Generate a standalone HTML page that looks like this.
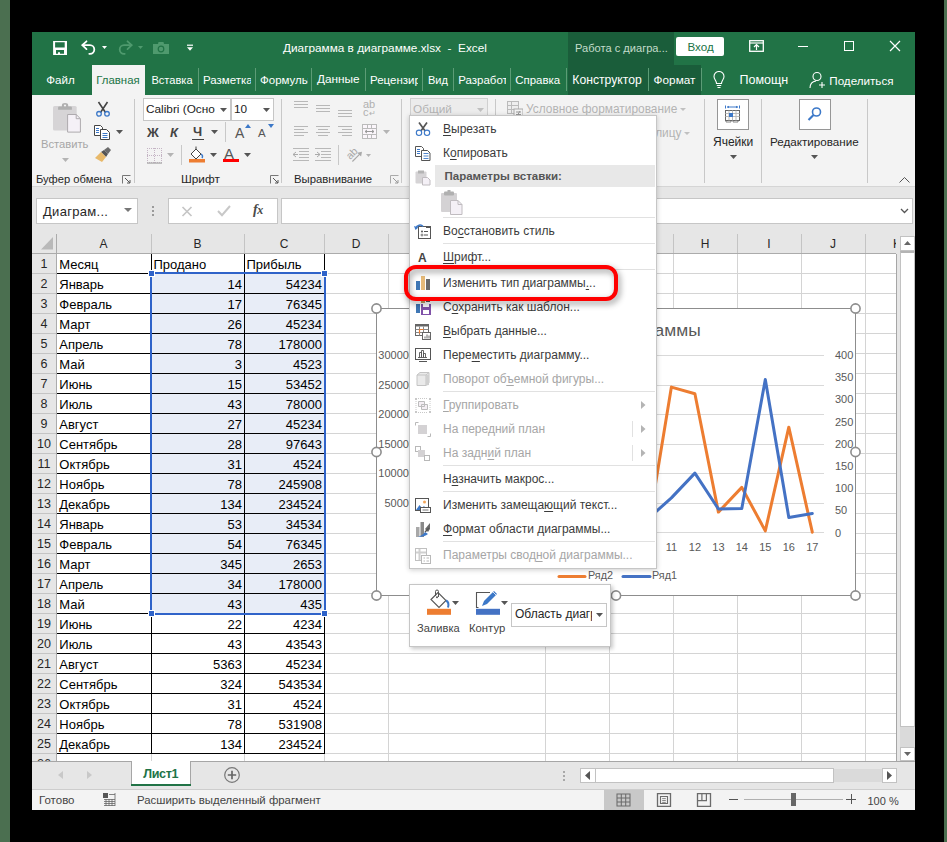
<!DOCTYPE html>
<html><head><meta charset="utf-8">
<style>
*{box-sizing:border-box;margin:0;padding:0}
html,body{width:947px;height:842px;overflow:hidden;background:#000;font-family:"Liberation Sans",sans-serif}
.a{position:absolute}
.t{position:absolute;white-space:nowrap;line-height:1}
#win{position:absolute;left:32px;top:32px;width:883px;height:777px;background:#e6e6e6;overflow:hidden}
</style></head><body>
<div class="a" style="left:0;top:0;width:10px;height:842px;background:#4b6f50"></div>
<div class="a" style="left:944px;top:0;width:3px;height:842px;background:#4b6f50"></div>
<div class="a" style="left:32px;top:32px;width:883px;height:778px;background:#e6e6e6"></div>
<div class="a" style="left:32px;top:32px;width:883px;height:63px;background:#217346"></div>
<div class="a" style="left:568px;top:32px;width:106px;height:33px;background:#1a5d3a"></div>
<div class="a" style="left:568px;top:65px;width:133px;height:30px;background:#1a5d3a"></div>
<div class="a" style="left:92px;top:65px;width:53px;height:30px;background:#f3f3f3"></div>
<!-- TITLEBAR CONTENT -->
<svg class="a" style="left:52px;top:40px" width="16" height="16" viewBox="0 0 16 16"><path fill="#fff" fill-rule="evenodd" d="M1.1 1H15V15H1.1zM3.1 2.2V7.6H12.7V2.2zM4 10.1V13.8H6V12.3H8V13.8H12V10.1z"/></svg>
<svg class="a" style="left:81px;top:40px" width="16" height="15" viewBox="0 0 16 15"><path d="M1.5 5.2h7.5a4.3 4.3 0 0 1 0 8.6H8.3" fill="none" stroke="#fff" stroke-width="1.8" stroke-linecap="round"/><path d="M5.5 1.3L1.3 5.2l4.2 3.9" fill="none" stroke="#fff" stroke-width="1.8" stroke-linecap="round" stroke-linejoin="round"/></svg>
<svg class="a" style="left:102px;top:46px" width="5" height="3" viewBox="0 0 5 3"><path d="M0 0h5L2.5 3z" fill="#fff"/></svg>
<svg class="a" style="left:117px;top:40px" width="16" height="15" viewBox="0 0 16 15"><path d="M14.5 5.2H7a4.3 4.3 0 0 0 0 8.6h0.7" fill="none" stroke="#4f9a6e" stroke-width="1.8" stroke-linecap="round"/><path d="M10.5 1.3l4.2 3.9-4.2 3.9" fill="none" stroke="#4f9a6e" stroke-width="1.8" stroke-linecap="round" stroke-linejoin="round"/></svg>
<svg class="a" style="left:138px;top:46px" width="5" height="3" viewBox="0 0 5 3"><path d="M0 0h5L2.5 3z" fill="#4f9a6e"/></svg>
<svg class="a" style="left:153px;top:42px" width="16" height="12" viewBox="0 0 16 12"><path d="M0 2h5l0.5-2h5l0.5 2h5v10H0z" fill="#4f9a6e"/><circle cx="8" cy="7" r="2.8" fill="none" stroke="#217346" stroke-width="1.2"/><rect x="6.8" y="5.8" width="2.4" height="2.4" fill="#4f9a6e"/></svg>
<svg class="a" style="left:187px;top:44px" width="6" height="7" viewBox="0 0 6 7"><rect x="0" y="0.6" width="6" height="1.2" fill="#fff"/><path d="M0 3.2h6L3 6.8z" fill="#fff"/></svg>
<div class="t" style="left:283px;top:42.5px;font-size:11.8px;color:#fff">Диаграмма в диаграмме.xlsx&nbsp; -&nbsp; Excel</div>
<div class="t" style="left:575px;top:43px;font-size:11.1px;color:#c4dccb">Работа с диагра...</div>
<div class="a" style="left:676px;top:37px;width:48px;height:19px;background:#fff;border-radius:2px"></div>
<div class="t" style="left:687.5px;top:41px;font-size:11.6px;color:#217346">Вход</div>
<svg class="a" style="left:749px;top:40px" width="15" height="12" viewBox="0 0 15 12"><rect x="0.7" y="0.7" width="13.6" height="10.6" fill="none" stroke="#fff" stroke-width="1.3"/><path d="M1 3h13" stroke="#fff" stroke-width="1.2"/><path d="M7.5 10V5M5 7l2.5-2.5L10 7" fill="none" stroke="#fff" stroke-width="1.2"/></svg>
<div class="a" style="left:798px;top:46px;width:10px;height:1px;background:#fff"></div>
<div class="a" style="left:844px;top:41px;width:10px;height:10px;border:1px solid #fff"></div>
<svg class="a" style="left:889px;top:40px" width="12" height="12" viewBox="0 0 12 12"><path d="M1 1l10 10M11 1L1 11" stroke="#fff" stroke-width="1.2"/></svg>
<!-- TABS -->
<div class="t" style="left:46.3px;top:74.6px;font-size:11.59px;color:#fff">Файл</div>
<div class="t" style="left:96.3px;top:74.8px;font-size:11.40px;color:#217346">Главная</div>
<div class="t" style="left:151.4px;top:75.0px;font-size:11.09px;color:#fff">Вставка</div>
<div class="a" style="left:198px;top:68px;width:1px;height:23px;background:#5c9c76"></div>
<div class="a" style="left:203px;top:65px;width:48px;height:30px;overflow:hidden"><div class="t" style="left:0;top:9.7px;font-size:11.50px;color:#fff">Разметка страницы</div></div>
<div class="a" style="left:255px;top:68px;width:1px;height:23px;background:#5c9c76"></div>
<div class="a" style="left:260px;top:65px;width:48px;height:30px;overflow:hidden"><div class="t" style="left:0;top:9.7px;font-size:11.50px;color:#fff">Формулы</div></div>
<div class="a" style="left:311px;top:68px;width:1px;height:23px;background:#5c9c76"></div>
<div class="t" style="left:317px;top:74.4px;font-size:11.81px;color:#fff">Данные</div>
<div class="a" style="left:365px;top:68px;width:1px;height:23px;background:#5c9c76"></div>
<div class="a" style="left:370px;top:65px;width:48px;height:30px;overflow:hidden"><div class="t" style="left:0;top:9.7px;font-size:11.50px;color:#fff">Рецензирование</div></div>
<div class="a" style="left:422px;top:68px;width:1px;height:23px;background:#5c9c76"></div>
<div class="t" style="left:428px;top:75.0px;font-size:11.06px;color:#fff">Вид</div>
<div class="a" style="left:453px;top:68px;width:1px;height:23px;background:#5c9c76"></div>
<div class="a" style="left:458.2px;top:65px;width:48px;height:30px;overflow:hidden"><div class="t" style="left:0;top:9.7px;font-size:11.50px;color:#fff">Разработчик</div></div>
<div class="a" style="left:510px;top:68px;width:1px;height:23px;background:#5c9c76"></div>
<div class="t" style="left:515.3px;top:74.7px;font-size:11.44px;color:#fff">Справка</div>
<div class="a" style="left:566px;top:68px;width:1px;height:23px;background:#5c9c76"></div>
<div class="t" style="left:572.3px;top:74.1px;font-size:12.19px;color:#fff">Конструктор</div>
<div class="a" style="left:648px;top:68px;width:1px;height:23px;background:#5c9c76"></div>
<div class="t" style="left:653.6px;top:74.4px;font-size:11.77px;color:#fff">Формат</div>
<div class="a" style="left:701px;top:68px;width:1px;height:23px;background:#5c9c76"></div>
<div class="t" style="left:739.5px;top:73.8px;font-size:12.51px;color:#fff">Помощн</div>
<div class="t" style="left:829.3px;top:74.5px;font-size:11.64px;color:#fff">Поделиться</div>
<svg class="a" style="left:713px;top:71px" width="12" height="18" viewBox="0 0 12 18"><path d="M3.5 12.5C3.5 9.5 1 8.5 1 5.5a5 5 0 0 1 10 0c0 3-2.5 4-2.5 7z" fill="none" stroke="#fff" stroke-width="1.1"/><path d="M3.8 14.5h4.4M4.5 16.5h3" stroke="#fff" stroke-width="1.1"/></svg>
<svg class="a" style="left:809px;top:71px" width="18" height="18" viewBox="0 0 18 18"><circle cx="8" cy="5.5" r="4" fill="none" stroke="#fff" stroke-width="1.1"/><path d="M1 17c0-4 2.5-6.5 6-7" fill="none" stroke="#fff" stroke-width="1.1"/><path d="M13 11v6M10 14h6" stroke="#fff" stroke-width="1.1"/></svg>


<div class="a" style="left:32px;top:95px;width:883px;height:92px;background:#f3f3f3;border-bottom:1px solid #d5d5d5"></div>
<!-- RIBBON CONTENT -->
<!-- clipboard group -->
<svg class="a" style="left:52px;top:102px" width="30" height="32" viewBox="0 0 30 32"><rect x="1" y="4" width="23.7" height="24.5" rx="1.5" fill="#d6d4d6"/><path d="M6.1 7.8V5.4a1 1 0 0 1 1-1h2.8V3.2a3.15 2.3 0 0 1 6.3 0v1.2h2.7a1 1 0 0 1 1 1v2.4z" fill="#b0b0b0"/><circle cx="13" cy="3.5" r="1.1" fill="#f3f3f3"/><path d="M15.6 12.5h8.6l4.2 4.2v13.4h-12.8z" fill="#f5f1f7" stroke="#aeaaae" stroke-width="1"/><path d="M24.2 12.5v4.2h4.2" fill="none" stroke="#aeaaae"/></svg>
<div class="t" style="left:41px;top:139px;font-size:11.2px;color:#a6a6a6">Вставить</div>
<svg class="a" style="left:62px;top:158px" width="7" height="4" viewBox="0 0 7 4"><path d="M0 0h7L3.5 4z" fill="#b4b4b4"/></svg>
<svg class="a" style="left:95px;top:101px" width="16" height="16" viewBox="0 0 16 16"><path d="M3.5 1l7 10.5M12.5 1l-7 10.5" stroke="#444" stroke-width="1.6"/><circle cx="4" cy="12.8" r="2.3" fill="none" stroke="#3c78c8" stroke-width="1.3"/><circle cx="12" cy="12.8" r="2.3" fill="none" stroke="#3c78c8" stroke-width="1.3"/></svg>
<svg class="a" style="left:94px;top:125px" width="17" height="15" viewBox="0 0 17 15"><path d="M0.5 0.5h6l2 2V10.5h-8z" fill="#fff" stroke="#444"/><path d="M2 3.5h3M2 5.5h3M2 7.5h3" stroke="#3c78c8"/><path d="M6.5 4.5h6l3 3v7h-9z" fill="#fff" stroke="#444"/><path d="M8.5 8.5h5M8.5 10.5h5M8.5 12.5h5" stroke="#3c78c8"/></svg>
<svg class="a" style="left:116px;top:130px" width="7" height="4" viewBox="0 0 7 4"><path d="M0 0h7L3.5 4z" fill="#555"/></svg>
<svg class="a" style="left:95px;top:147px" width="16" height="15" viewBox="0 0 16 15"><path d="M9 3l4-3 3 3-3 4z" fill="#6b6b6b"/><path d="M6 5l3-2 4 4-2 3z" fill="#555"/><path d="M0 11l6-6 5 5-4 5z" fill="#e8b96a"/></svg>
<div class="t" style="left:36px;top:174px;font-size:11.2px;color:#262626">Буфер обмена</div>
<svg class="a" style="left:122px;top:175px" width="9" height="9" viewBox="0 0 9 9"><path d="M0.5 8.5v-8h8" fill="none" stroke="#777"/><path d="M3 3l5 5M8 5v3H5" fill="none" stroke="#555"/></svg>
<div class="a" style="left:134px;top:99px;width:1px;height:84px;background:#c8c8c8"></div>

<!-- font group -->
<div class="a" style="left:143px;top:98px;width:88px;height:23px;background:#fff;border:1px solid #c6c6c6"></div>
<div class="t" style="left:146px;top:104px;font-size:11.8px;color:#222">Calibri (Осно</div>
<svg class="a" style="left:220px;top:108px" width="7" height="4" viewBox="0 0 7 4"><path d="M0 0h7L3.5 4z" fill="#555"/></svg>
<div class="a" style="left:231px;top:98px;width:43px;height:23px;background:#fff;border:1px solid #c6c6c6"></div>
<div class="t" style="left:234px;top:104px;font-size:11.8px;color:#222">10</div>
<svg class="a" style="left:263px;top:108px" width="7" height="4" viewBox="0 0 7 4"><path d="M0 0h7L3.5 4z" fill="#555"/></svg>
<div class="t" style="left:147px;top:126px;font-size:13px;font-weight:bold;color:#444">Ж</div>
<div class="t" style="left:170px;top:126px;font-size:13px;font-weight:bold;font-style:italic;color:#444">К</div>
<div class="t" style="left:193px;top:125px;font-size:13px;font-weight:bold;color:#444">Ч</div>
<div class="a" style="left:192px;top:139px;width:12px;height:1px;background:#444"></div>
<svg class="a" style="left:211px;top:130px" width="7" height="4" viewBox="0 0 7 4"><path d="M0 0h7L3.5 4z" fill="#555"/></svg>
<div class="a" style="left:225px;top:122px;width:1px;height:20px;background:#c8c8c8"></div>
<div class="t" style="left:235px;top:126px;font-size:14px;color:#555">A</div>
<svg class="a" style="left:245px;top:124px" width="6" height="4" viewBox="0 0 6 4"><path d="M0 4h6L3 0z" fill="#3c78c8"/></svg>
<div class="t" style="left:258px;top:128px;font-size:11.5px;color:#555">A</div>
<svg class="a" style="left:268px;top:124px" width="6" height="4" viewBox="0 0 6 4"><path d="M0 0h6L3 4z" fill="#3c78c8"/></svg>
<svg class="a" style="left:147px;top:148px" width="15" height="16" viewBox="0 0 15 16"><g fill="#c4b4c4"><rect x="0" y="0" width="1" height="1"/><rect x="0" y="0" width="1" height="1"/><rect x="0" y="7" width="1" height="1"/><rect x="7" y="0" width="1" height="1"/><rect x="0" y="14" width="1" height="1"/><rect x="14" y="0" width="1" height="1"/><rect x="2" y="0" width="1" height="1"/><rect x="0" y="2" width="1" height="1"/><rect x="2" y="7" width="1" height="1"/><rect x="7" y="2" width="1" height="1"/><rect x="2" y="14" width="1" height="1"/><rect x="14" y="2" width="1" height="1"/><rect x="4" y="0" width="1" height="1"/><rect x="0" y="4" width="1" height="1"/><rect x="4" y="7" width="1" height="1"/><rect x="7" y="4" width="1" height="1"/><rect x="4" y="14" width="1" height="1"/><rect x="14" y="4" width="1" height="1"/><rect x="6" y="0" width="1" height="1"/><rect x="0" y="6" width="1" height="1"/><rect x="6" y="7" width="1" height="1"/><rect x="7" y="6" width="1" height="1"/><rect x="6" y="14" width="1" height="1"/><rect x="14" y="6" width="1" height="1"/><rect x="8" y="0" width="1" height="1"/><rect x="0" y="8" width="1" height="1"/><rect x="8" y="7" width="1" height="1"/><rect x="7" y="8" width="1" height="1"/><rect x="8" y="14" width="1" height="1"/><rect x="14" y="8" width="1" height="1"/><rect x="10" y="0" width="1" height="1"/><rect x="0" y="10" width="1" height="1"/><rect x="10" y="7" width="1" height="1"/><rect x="7" y="10" width="1" height="1"/><rect x="10" y="14" width="1" height="1"/><rect x="14" y="10" width="1" height="1"/><rect x="12" y="0" width="1" height="1"/><rect x="0" y="12" width="1" height="1"/><rect x="12" y="7" width="1" height="1"/><rect x="7" y="12" width="1" height="1"/><rect x="12" y="14" width="1" height="1"/><rect x="14" y="12" width="1" height="1"/><rect x="14" y="0" width="1" height="1"/><rect x="0" y="14" width="1" height="1"/><rect x="14" y="7" width="1" height="1"/><rect x="7" y="14" width="1" height="1"/><rect x="14" y="14" width="1" height="1"/><rect x="14" y="14" width="1" height="1"/></g><rect x="0" y="14.5" width="15" height="1.2" fill="#a8a8a8"/></svg>
<svg class="a" style="left:167px;top:153px" width="7" height="4" viewBox="0 0 7 4"><path d="M0 0h7L3.5 4z" fill="#b4b4b4"/></svg>
<div class="a" style="left:181px;top:145px;width:1px;height:20px;background:#c8c8c8"></div>
<svg class="a" style="left:189px;top:146px" width="17" height="17" viewBox="0 0 17 17"><path d="M2 8l5-5 5 5-5 5z" fill="#fff" stroke="#444"/><path d="M7 3V0.5" stroke="#444"/><path d="M12 8c1.5 1 2 2.5 1 4" fill="none" stroke="#3c78c8" stroke-width="1.5"/><rect x="0" y="13" width="16" height="3.5" fill="#ed7d31"/></svg>
<svg class="a" style="left:210px;top:153px" width="7" height="4" viewBox="0 0 7 4"><path d="M0 0h7L3.5 4z" fill="#555"/></svg>
<div class="t" style="left:224px;top:146px;font-size:15px;color:#555">A</div>
<div class="a" style="left:223px;top:159px;width:16px;height:3px;background:#f00"></div>
<svg class="a" style="left:244px;top:153px" width="7" height="4" viewBox="0 0 7 4"><path d="M0 0h7L3.5 4z" fill="#555"/></svg>
<div class="t" style="left:181px;top:174px;font-size:11.8px;color:#262626">Шрифт</div>
<svg class="a" style="left:270px;top:175px" width="9" height="9" viewBox="0 0 9 9"><path d="M0.5 8.5v-8h8" fill="none" stroke="#777"/><path d="M3 3l5 5M8 5v3H5" fill="none" stroke="#555"/></svg>
<div class="a" style="left:281px;top:99px;width:1px;height:84px;background:#c8c8c8"></div>

<!-- alignment group -->
<svg class="a" style="left:293px;top:100px" width="62" height="18" viewBox="0 0 62 18"><g stroke="#b8b8b8" stroke-width="1"><path d="M1 1.5h14M1 4.5h14M1 7.5h14"/><path d="M23 5.5h14M23 8.5h14M23 11.5h14"/><path d="M45 10.5h14M45 13.5h14M45 16.5h14"/></g></svg>
<div class="t" style="left:363px;top:100px;font-size:11px;color:#b0b0b0;line-height:0.75">ab<br>c<span style="font-size:8px">↵</span></div>
<svg class="a" style="left:293px;top:125px" width="62" height="14" viewBox="0 0 62 14"><g stroke="#b8b8b8"><path d="M1 1.5h14M1 4.5h10M1 7.5h14M1 10.5h10"/><path d="M23 1.5h14M25 4.5h10M23 7.5h14M25 10.5h10"/><path d="M45 1.5h14M49 4.5h10M45 7.5h14M49 10.5h10"/></g></svg>
<svg class="a" style="left:362px;top:124px" width="16" height="16" viewBox="0 0 16 16"><rect x="0.5" y="0.5" width="14" height="14" fill="#fbf6fb" stroke="#bbb"/><path d="M0.5 4.5h14M0.5 10.5h14M5.5 0.5v4M9.5 0.5v4M5.5 10.5v4M9.5 10.5v4" stroke="#bbb"/><path d="M3 7.5h9M3 7.5l2-1.5M3 7.5l2 1.5M12 7.5l-2-1.5M12 7.5l-2 1.5" stroke="#999" fill="none"/></svg>
<svg class="a" style="left:383px;top:130px" width="7" height="4" viewBox="0 0 7 4"><path d="M0 0h7L3.5 4z" fill="#b4b4b4"/></svg>
<svg class="a" style="left:292px;top:147px" width="40" height="15" viewBox="0 0 40 15"><g stroke="#b8b8b8"><path d="M1 1.5h16M7 4.5h10M7 7.5h10M7 10.5h10M1 13.5h16"/><path d="M1 7.5h5M1 7.5l3-2.5M1 7.5l3 2.5" stroke="#aaa"/><path d="M23 1.5h16M29 4.5h10M29 7.5h10M29 10.5h10M23 13.5h16"/><path d="M23 7.5h5M28 7.5l-3-2.5M28 7.5l-3 2.5" stroke="#aaa"/></g></svg>
<div class="a" style="left:338px;top:145px;width:1px;height:20px;background:#c8c8c8"></div>
<svg class="a" style="left:344px;top:146px" width="20" height="17" viewBox="0 0 20 17"><text x="7.8" y="11" text-anchor="middle" font-size="10.5" fill="#a8a8a8" font-family="Liberation Sans" transform="rotate(-45 7.8 7.5)">ab</text><path d="M8.4 15.5L16.5 7.4" stroke="#a8a8a8" stroke-width="1.1"/><path d="M18 5.8l-4.8 0.9 3.9 3.9z" fill="#a8a8a8"/></svg>
<svg class="a" style="left:366px;top:154px" width="5" height="3" viewBox="0 0 5 3"><path d="M0 0h5L2.5 3z" fill="#b4b4b4"/></svg>
<div class="t" style="left:294px;top:174px;font-size:11.35px;color:#262626">Выравнивание</div>
<svg class="a" style="left:390px;top:175px" width="9" height="9" viewBox="0 0 9 9"><path d="M0.5 8.5v-8h8" fill="none" stroke="#aaa"/><path d="M3 3l5 5M8 5v3H5" fill="none" stroke="#999"/></svg>
<div class="a" style="left:401px;top:99px;width:1px;height:84px;background:#c8c8c8"></div>

<!-- number group (mostly covered) -->
<div class="a" style="left:410px;top:98px;width:78px;height:23px;background:#ececec;border:1px solid #d0d0d0"></div>
<div class="t" style="left:413px;top:104px;font-size:11.8px;color:#b4b4b4">Общий</div>
<svg class="a" style="left:477px;top:108px" width="7" height="4" viewBox="0 0 7 4"><path d="M0 0h7L3.5 4z" fill="#c0c0c0"/></svg>
<div class="a" style="left:495px;top:99px;width:1px;height:84px;background:#c8c8c8"></div>
<svg class="a" style="left:507px;top:101px" width="16" height="17" viewBox="0 0 16 17"><rect x="0.5" y="0.5" width="11" height="12" fill="#eee" stroke="#bbb"/><path d="M0.5 4.5h11M0.5 8.5h11M4.5 0.5v12" stroke="#bbb"/><rect x="7" y="8" width="9" height="9" fill="#f3f3f3" stroke="#aaa"/><path d="M9 11h5M9 13.5h5M13 10l-3 5" stroke="#999"/></svg>
<div class="t" style="left:526px;top:104px;font-size:11.9px;color:#b4b4b4">Условное форматирование</div>
<svg class="a" style="left:680px;top:108px" width="6" height="3" viewBox="0 0 6 3"><path d="M0 0h6L3 3z" fill="#c0c0c0"/></svg>
<div class="t" style="right:265.5px;top:128px;font-size:11.9px;color:#b4b4b4">таблицу</div>
<svg class="a" style="left:684px;top:132px" width="6" height="3" viewBox="0 0 6 3"><path d="M0 0h6L3 3z" fill="#c0c0c0"/></svg>
<div class="a" style="left:704px;top:99px;width:1px;height:84px;background:#c8c8c8"></div>

<!-- cells group -->
<div class="a" style="left:717px;top:99px;width:32px;height:31px;background:#fff;border:1px solid #969696"></div>
<svg class="a" style="left:724px;top:105px" width="17" height="18" viewBox="0 0 17 18"><path d="M1.5 0.5v3M15.5 0.5v3M3 2h11" stroke="#3c78c8" stroke-width="1"/><path d="M3 2l2-1.3v2.6zM14 2l-2-1.3v2.6z" fill="#3c78c8"/><rect x="1.5" y="5.5" width="14" height="10" fill="#fff" stroke="#666"/><path d="M1.5 8.5h14M1.5 11.5h14M5 5.5v10M8.5 5.5v10M12 5.5v10" stroke="#bbb" stroke-width="1"/><rect x="5" y="8" width="4" height="4" fill="#3c78c8"/><path d="M2 15.5v1.5h5v-1.5M9 15.5v1.5h5v-1.5" fill="none" stroke="#777" stroke-width="0.9"/></svg>
<div class="t" style="left:713px;top:136px;font-size:12px;color:#262626">Ячейки</div>
<svg class="a" style="left:730px;top:155px" width="7" height="4" viewBox="0 0 7 4"><path d="M0 0h7L3.5 4z" fill="#555"/></svg>
<div class="a" style="left:761px;top:99px;width:1px;height:84px;background:#c8c8c8"></div>
<!-- editing group -->
<div class="a" style="left:799px;top:99px;width:32px;height:31px;background:#fff;border:1px solid #969696"></div>
<svg class="a" style="left:806px;top:106px" width="17" height="16" viewBox="0 0 17 16"><circle cx="10.5" cy="6" r="4" fill="none" stroke="#3c78c8" stroke-width="1.6"/><path d="M7.5 9l-5 5" stroke="#3c78c8" stroke-width="2.2"/></svg>
<div class="t" style="left:770px;top:136px;font-size:11.65px;color:#262626">Редактирование</div>
<svg class="a" style="left:811px;top:155px" width="7" height="4" viewBox="0 0 7 4"><path d="M0 0h7L3.5 4z" fill="#555"/></svg>
<div class="a" style="left:867px;top:99px;width:1px;height:84px;background:#c8c8c8"></div>
<svg class="a" style="left:899px;top:177px" width="11" height="6" viewBox="0 0 11 6"><path d="M0.5 5.5l5-5 5 5" fill="none" stroke="#555"/></svg>


<div class="a" style="left:36px;top:198px;width:102px;height:26px;background:#fff;border:1px solid #c6c6c6"></div>
<div class="t" style="left:43px;top:204.7px;font-size:13px;color:#262626;letter-spacing:0.3px">Диаграм...</div>
<svg class="a" style="left:124px;top:208px" width="8" height="4" viewBox="0 0 8 4"><path d="M0 0h8L4 4z" fill="#777"/></svg>
<div class="a" style="left:152px;top:206px;width:2px;height:2px;background:#9a9a9a"></div>
<div class="a" style="left:152px;top:210px;width:2px;height:2px;background:#9a9a9a"></div>
<div class="a" style="left:152px;top:214px;width:2px;height:2px;background:#9a9a9a"></div>
<div class="a" style="left:168px;top:198px;width:110px;height:26px;background:#fff;border:1px solid #c6c6c6"></div>
<svg class="a" style="left:181px;top:206px" width="12" height="11" viewBox="0 0 12 11"><path d="M1.5 1l9 9M10.5 1l-9 9" stroke="#c6c6c6" stroke-width="1.7"/></svg>
<svg class="a" style="left:217px;top:205px" width="14" height="12" viewBox="0 0 14 12"><path d="M1 6l4 4.2L13 1" fill="none" stroke="#c8c8c8" stroke-width="2"/></svg>
<div class="t" style="left:253px;top:203px;font-size:14px;font-style:italic;font-family:'Liberation Serif',serif;color:#4a4a4a;font-weight:bold;letter-spacing:-0.5px">f<span style="font-size:12px">x</span></div>
<div class="a" style="left:281px;top:198px;width:632px;height:26px;background:#fff;border:1px solid #c6c6c6"></div>
<svg class="a" style="left:900px;top:208px" width="9" height="6" viewBox="0 0 9 6"><path d="M1 1l3.5 3.5L8 1" fill="none" stroke="#555" stroke-width="1.3"/></svg>
<div class="a" style="left:32px;top:234px;width:865px;height:20px;background:#e6e6e6;border-bottom:1px solid #ababab"></div>
<svg class="a" style="left:41px;top:237px" width="13" height="14" viewBox="0 0 13 14"><path d="M12 0v12.6H0z" fill="#b9b9b9"/></svg>
<div class="a" style="left:56px;top:234px;width:1px;height:19px;background:#c4c4c4"></div>
<div class="a" style="left:151px;top:234px;width:1px;height:19px;background:#c4c4c4"></div>
<div class="a" style="left:244px;top:234px;width:1px;height:19px;background:#c4c4c4"></div>
<div class="a" style="left:324px;top:234px;width:1px;height:19px;background:#c4c4c4"></div>
<div class="a" style="left:388px;top:234px;width:1px;height:19px;background:#c4c4c4"></div>
<div class="a" style="left:545px;top:234px;width:1px;height:19px;background:#c4c4c4"></div>
<div class="a" style="left:609px;top:234px;width:1px;height:19px;background:#c4c4c4"></div>
<div class="a" style="left:673px;top:234px;width:1px;height:19px;background:#c4c4c4"></div>
<div class="a" style="left:737px;top:234px;width:1px;height:19px;background:#c4c4c4"></div>
<div class="a" style="left:801px;top:234px;width:1px;height:19px;background:#c4c4c4"></div>
<div class="a" style="left:865px;top:234px;width:1px;height:19px;background:#c4c4c4"></div>
<div class="t" style="left:3.5px;width:200px;text-align:center;top:237.8px;font-size:12px;color:#262626;">A</div>
<div class="t" style="left:97.5px;width:200px;text-align:center;top:237.8px;font-size:12px;color:#262626;">B</div>
<div class="t" style="left:184.0px;width:200px;text-align:center;top:237.8px;font-size:12px;color:#262626;">C</div>
<div class="t" style="left:256.0px;width:200px;text-align:center;top:237.8px;font-size:12px;color:#262626;">D</div>
<div class="t" style="left:366.5px;width:200px;text-align:center;top:237.8px;font-size:12px;color:#262626;">E</div>
<div class="t" style="left:477.0px;width:200px;text-align:center;top:237.8px;font-size:12px;color:#262626;">F</div>
<div class="t" style="left:541.0px;width:200px;text-align:center;top:237.8px;font-size:12px;color:#262626;">G</div>
<div class="t" style="left:605.0px;width:200px;text-align:center;top:237.8px;font-size:12px;color:#262626;">H</div>
<div class="t" style="left:669.0px;width:200px;text-align:center;top:237.8px;font-size:12px;color:#262626;">I</div>
<div class="t" style="left:733.0px;width:200px;text-align:center;top:237.8px;font-size:12px;color:#262626;">J</div>
<div class="t" style="left:797.0px;width:200px;text-align:center;top:237.8px;font-size:12px;color:#262626;">K</div>
<div class="a" style="left:896px;top:234px;width:19px;height:527px;background:#e6e6e6"></div>
<div class="a" style="left:57px;top:254px;width:839px;height:507px;background:#fff"></div>
<div class="a" style="left:32px;top:254px;width:24px;height:507px;background:#e6e6e6"></div>
<div class="a" style="left:56px;top:234px;width:1px;height:527px;background:#ababab"></div>
<div class="a" style="left:32px;top:273px;width:24px;height:1px;background:#c4c4c4"></div>
<div class="a" style="left:324px;top:273px;width:572px;height:1px;background:#d4d4d4"></div>
<div class="a" style="left:32px;top:293px;width:24px;height:1px;background:#c4c4c4"></div>
<div class="a" style="left:324px;top:293px;width:572px;height:1px;background:#d4d4d4"></div>
<div class="a" style="left:32px;top:313px;width:24px;height:1px;background:#c4c4c4"></div>
<div class="a" style="left:324px;top:313px;width:572px;height:1px;background:#d4d4d4"></div>
<div class="a" style="left:32px;top:333px;width:24px;height:1px;background:#c4c4c4"></div>
<div class="a" style="left:324px;top:333px;width:572px;height:1px;background:#d4d4d4"></div>
<div class="a" style="left:32px;top:353px;width:24px;height:1px;background:#c4c4c4"></div>
<div class="a" style="left:324px;top:353px;width:572px;height:1px;background:#d4d4d4"></div>
<div class="a" style="left:32px;top:373px;width:24px;height:1px;background:#c4c4c4"></div>
<div class="a" style="left:324px;top:373px;width:572px;height:1px;background:#d4d4d4"></div>
<div class="a" style="left:32px;top:393px;width:24px;height:1px;background:#c4c4c4"></div>
<div class="a" style="left:324px;top:393px;width:572px;height:1px;background:#d4d4d4"></div>
<div class="a" style="left:32px;top:413px;width:24px;height:1px;background:#c4c4c4"></div>
<div class="a" style="left:324px;top:413px;width:572px;height:1px;background:#d4d4d4"></div>
<div class="a" style="left:32px;top:433px;width:24px;height:1px;background:#c4c4c4"></div>
<div class="a" style="left:324px;top:433px;width:572px;height:1px;background:#d4d4d4"></div>
<div class="a" style="left:32px;top:453px;width:24px;height:1px;background:#c4c4c4"></div>
<div class="a" style="left:324px;top:453px;width:572px;height:1px;background:#d4d4d4"></div>
<div class="a" style="left:32px;top:473px;width:24px;height:1px;background:#c4c4c4"></div>
<div class="a" style="left:324px;top:473px;width:572px;height:1px;background:#d4d4d4"></div>
<div class="a" style="left:32px;top:493px;width:24px;height:1px;background:#c4c4c4"></div>
<div class="a" style="left:324px;top:493px;width:572px;height:1px;background:#d4d4d4"></div>
<div class="a" style="left:32px;top:513px;width:24px;height:1px;background:#c4c4c4"></div>
<div class="a" style="left:324px;top:513px;width:572px;height:1px;background:#d4d4d4"></div>
<div class="a" style="left:32px;top:533px;width:24px;height:1px;background:#c4c4c4"></div>
<div class="a" style="left:324px;top:533px;width:572px;height:1px;background:#d4d4d4"></div>
<div class="a" style="left:32px;top:553px;width:24px;height:1px;background:#c4c4c4"></div>
<div class="a" style="left:324px;top:553px;width:572px;height:1px;background:#d4d4d4"></div>
<div class="a" style="left:32px;top:573px;width:24px;height:1px;background:#c4c4c4"></div>
<div class="a" style="left:324px;top:573px;width:572px;height:1px;background:#d4d4d4"></div>
<div class="a" style="left:32px;top:593px;width:24px;height:1px;background:#c4c4c4"></div>
<div class="a" style="left:324px;top:593px;width:572px;height:1px;background:#d4d4d4"></div>
<div class="a" style="left:32px;top:613px;width:24px;height:1px;background:#c4c4c4"></div>
<div class="a" style="left:324px;top:613px;width:572px;height:1px;background:#d4d4d4"></div>
<div class="a" style="left:32px;top:633px;width:24px;height:1px;background:#c4c4c4"></div>
<div class="a" style="left:324px;top:633px;width:572px;height:1px;background:#d4d4d4"></div>
<div class="a" style="left:32px;top:653px;width:24px;height:1px;background:#c4c4c4"></div>
<div class="a" style="left:324px;top:653px;width:572px;height:1px;background:#d4d4d4"></div>
<div class="a" style="left:32px;top:673px;width:24px;height:1px;background:#c4c4c4"></div>
<div class="a" style="left:324px;top:673px;width:572px;height:1px;background:#d4d4d4"></div>
<div class="a" style="left:32px;top:693px;width:24px;height:1px;background:#c4c4c4"></div>
<div class="a" style="left:324px;top:693px;width:572px;height:1px;background:#d4d4d4"></div>
<div class="a" style="left:32px;top:713px;width:24px;height:1px;background:#c4c4c4"></div>
<div class="a" style="left:324px;top:713px;width:572px;height:1px;background:#d4d4d4"></div>
<div class="a" style="left:32px;top:733px;width:24px;height:1px;background:#c4c4c4"></div>
<div class="a" style="left:324px;top:733px;width:572px;height:1px;background:#d4d4d4"></div>
<div class="a" style="left:32px;top:753px;width:24px;height:1px;background:#c4c4c4"></div>
<div class="a" style="left:324px;top:753px;width:572px;height:1px;background:#d4d4d4"></div>
<div class="a" style="left:388px;top:254px;width:1px;height:507px;background:#d4d4d4"></div>
<div class="a" style="left:545px;top:254px;width:1px;height:507px;background:#d4d4d4"></div>
<div class="a" style="left:609px;top:254px;width:1px;height:507px;background:#d4d4d4"></div>
<div class="a" style="left:673px;top:254px;width:1px;height:507px;background:#d4d4d4"></div>
<div class="a" style="left:737px;top:254px;width:1px;height:507px;background:#d4d4d4"></div>
<div class="a" style="left:801px;top:254px;width:1px;height:507px;background:#d4d4d4"></div>
<div class="a" style="left:865px;top:254px;width:1px;height:507px;background:#d4d4d4"></div>
<div class="a" style="left:152px;top:274px;width:172px;height:339px;background:#e8edf7"></div>
<div class="a" style="left:57px;top:273px;width:268px;height:1px;background:#000"></div>
<div class="a" style="left:57px;top:293px;width:268px;height:1px;background:#000"></div>
<div class="a" style="left:57px;top:313px;width:268px;height:1px;background:#000"></div>
<div class="a" style="left:57px;top:333px;width:268px;height:1px;background:#000"></div>
<div class="a" style="left:57px;top:353px;width:268px;height:1px;background:#000"></div>
<div class="a" style="left:57px;top:373px;width:268px;height:1px;background:#000"></div>
<div class="a" style="left:57px;top:393px;width:268px;height:1px;background:#000"></div>
<div class="a" style="left:57px;top:413px;width:268px;height:1px;background:#000"></div>
<div class="a" style="left:57px;top:433px;width:268px;height:1px;background:#000"></div>
<div class="a" style="left:57px;top:453px;width:268px;height:1px;background:#000"></div>
<div class="a" style="left:57px;top:473px;width:268px;height:1px;background:#000"></div>
<div class="a" style="left:57px;top:493px;width:268px;height:1px;background:#000"></div>
<div class="a" style="left:57px;top:513px;width:268px;height:1px;background:#000"></div>
<div class="a" style="left:57px;top:533px;width:268px;height:1px;background:#000"></div>
<div class="a" style="left:57px;top:553px;width:268px;height:1px;background:#000"></div>
<div class="a" style="left:57px;top:573px;width:268px;height:1px;background:#000"></div>
<div class="a" style="left:57px;top:593px;width:268px;height:1px;background:#000"></div>
<div class="a" style="left:57px;top:613px;width:268px;height:1px;background:#000"></div>
<div class="a" style="left:57px;top:633px;width:268px;height:1px;background:#000"></div>
<div class="a" style="left:57px;top:653px;width:268px;height:1px;background:#000"></div>
<div class="a" style="left:57px;top:673px;width:268px;height:1px;background:#000"></div>
<div class="a" style="left:57px;top:693px;width:268px;height:1px;background:#000"></div>
<div class="a" style="left:57px;top:713px;width:268px;height:1px;background:#000"></div>
<div class="a" style="left:57px;top:733px;width:268px;height:1px;background:#000"></div>
<div class="a" style="left:57px;top:753px;width:268px;height:1px;background:#000"></div>
<div class="a" style="left:151px;top:254px;width:1px;height:500px;background:#000"></div>
<div class="a" style="left:244px;top:254px;width:1px;height:500px;background:#000"></div>
<div class="a" style="left:324px;top:254px;width:1px;height:500px;background:#000"></div>
<div class="a" style="left:151px;top:754px;width:1px;height:7px;background:#d4d4d4"></div>
<div class="a" style="left:244px;top:754px;width:1px;height:7px;background:#d4d4d4"></div>
<div class="a" style="left:324px;top:754px;width:1px;height:7px;background:#d4d4d4"></div>
<div class="t" style="left:-56px;width:200px;text-align:center;top:258.4px;font-size:12.5px;color:#262626;">1</div>
<div class="t" style="left:59.3px;top:258.0px;font-size:13px;color:#000;">Месяц</div>
<div class="t" style="left:153.5px;top:258.0px;font-size:13px;color:#000;">Продано</div>
<div class="t" style="left:246.5px;top:258.0px;font-size:13px;color:#000;">Прибыль</div>
<div class="t" style="left:-56px;width:200px;text-align:center;top:278.4px;font-size:12.5px;color:#262626;">2</div>
<div class="t" style="left:59.3px;top:278.0px;font-size:13px;color:#000;">Январь</div>
<div class="t" style="right:705px;top:278.0px;font-size:13px;color:#000;">14</div>
<div class="t" style="right:625px;top:278.0px;font-size:13px;color:#000;">54234</div>
<div class="t" style="left:-56px;width:200px;text-align:center;top:298.4px;font-size:12.5px;color:#262626;">3</div>
<div class="t" style="left:59.3px;top:298.0px;font-size:13px;color:#000;">Февраль</div>
<div class="t" style="right:705px;top:298.0px;font-size:13px;color:#000;">17</div>
<div class="t" style="right:625px;top:298.0px;font-size:13px;color:#000;">76345</div>
<div class="t" style="left:-56px;width:200px;text-align:center;top:318.4px;font-size:12.5px;color:#262626;">4</div>
<div class="t" style="left:59.3px;top:318.0px;font-size:13px;color:#000;">Март</div>
<div class="t" style="right:705px;top:318.0px;font-size:13px;color:#000;">26</div>
<div class="t" style="right:625px;top:318.0px;font-size:13px;color:#000;">45234</div>
<div class="t" style="left:-56px;width:200px;text-align:center;top:338.4px;font-size:12.5px;color:#262626;">5</div>
<div class="t" style="left:59.3px;top:338.0px;font-size:13px;color:#000;">Апрель</div>
<div class="t" style="right:705px;top:338.0px;font-size:13px;color:#000;">78</div>
<div class="t" style="right:625px;top:338.0px;font-size:13px;color:#000;">178000</div>
<div class="t" style="left:-56px;width:200px;text-align:center;top:358.4px;font-size:12.5px;color:#262626;">6</div>
<div class="t" style="left:59.3px;top:358.0px;font-size:13px;color:#000;">Май</div>
<div class="t" style="right:705px;top:358.0px;font-size:13px;color:#000;">3</div>
<div class="t" style="right:625px;top:358.0px;font-size:13px;color:#000;">4523</div>
<div class="t" style="left:-56px;width:200px;text-align:center;top:378.4px;font-size:12.5px;color:#262626;">7</div>
<div class="t" style="left:59.3px;top:378.0px;font-size:13px;color:#000;">Июнь</div>
<div class="t" style="right:705px;top:378.0px;font-size:13px;color:#000;">15</div>
<div class="t" style="right:625px;top:378.0px;font-size:13px;color:#000;">53452</div>
<div class="t" style="left:-56px;width:200px;text-align:center;top:398.4px;font-size:12.5px;color:#262626;">8</div>
<div class="t" style="left:59.3px;top:398.0px;font-size:13px;color:#000;">Июль</div>
<div class="t" style="right:705px;top:398.0px;font-size:13px;color:#000;">43</div>
<div class="t" style="right:625px;top:398.0px;font-size:13px;color:#000;">78000</div>
<div class="t" style="left:-56px;width:200px;text-align:center;top:418.4px;font-size:12.5px;color:#262626;">9</div>
<div class="t" style="left:59.3px;top:418.0px;font-size:13px;color:#000;">Август</div>
<div class="t" style="right:705px;top:418.0px;font-size:13px;color:#000;">27</div>
<div class="t" style="right:625px;top:418.0px;font-size:13px;color:#000;">45234</div>
<div class="t" style="left:-56px;width:200px;text-align:center;top:438.4px;font-size:12.5px;color:#262626;">10</div>
<div class="t" style="left:59.3px;top:438.0px;font-size:13px;color:#000;">Сентябрь</div>
<div class="t" style="right:705px;top:438.0px;font-size:13px;color:#000;">28</div>
<div class="t" style="right:625px;top:438.0px;font-size:13px;color:#000;">97643</div>
<div class="t" style="left:-56px;width:200px;text-align:center;top:458.4px;font-size:12.5px;color:#262626;">11</div>
<div class="t" style="left:59.3px;top:458.0px;font-size:13px;color:#000;">Октябрь</div>
<div class="t" style="right:705px;top:458.0px;font-size:13px;color:#000;">31</div>
<div class="t" style="right:625px;top:458.0px;font-size:13px;color:#000;">4524</div>
<div class="t" style="left:-56px;width:200px;text-align:center;top:478.4px;font-size:12.5px;color:#262626;">12</div>
<div class="t" style="left:59.3px;top:478.0px;font-size:13px;color:#000;">Ноябрь</div>
<div class="t" style="right:705px;top:478.0px;font-size:13px;color:#000;">78</div>
<div class="t" style="right:625px;top:478.0px;font-size:13px;color:#000;">245908</div>
<div class="t" style="left:-56px;width:200px;text-align:center;top:498.4px;font-size:12.5px;color:#262626;">13</div>
<div class="t" style="left:59.3px;top:498.0px;font-size:13px;color:#000;">Декабрь</div>
<div class="t" style="right:705px;top:498.0px;font-size:13px;color:#000;">134</div>
<div class="t" style="right:625px;top:498.0px;font-size:13px;color:#000;">234524</div>
<div class="t" style="left:-56px;width:200px;text-align:center;top:518.4px;font-size:12.5px;color:#262626;">14</div>
<div class="t" style="left:59.3px;top:518.0px;font-size:13px;color:#000;">Январь</div>
<div class="t" style="right:705px;top:518.0px;font-size:13px;color:#000;">53</div>
<div class="t" style="right:625px;top:518.0px;font-size:13px;color:#000;">34534</div>
<div class="t" style="left:-56px;width:200px;text-align:center;top:538.4px;font-size:12.5px;color:#262626;">15</div>
<div class="t" style="left:59.3px;top:538.0px;font-size:13px;color:#000;">Февраль</div>
<div class="t" style="right:705px;top:538.0px;font-size:13px;color:#000;">54</div>
<div class="t" style="right:625px;top:538.0px;font-size:13px;color:#000;">76345</div>
<div class="t" style="left:-56px;width:200px;text-align:center;top:558.4px;font-size:12.5px;color:#262626;">16</div>
<div class="t" style="left:59.3px;top:558.0px;font-size:13px;color:#000;">Март</div>
<div class="t" style="right:705px;top:558.0px;font-size:13px;color:#000;">345</div>
<div class="t" style="right:625px;top:558.0px;font-size:13px;color:#000;">2653</div>
<div class="t" style="left:-56px;width:200px;text-align:center;top:578.4px;font-size:12.5px;color:#262626;">17</div>
<div class="t" style="left:59.3px;top:578.0px;font-size:13px;color:#000;">Апрель</div>
<div class="t" style="right:705px;top:578.0px;font-size:13px;color:#000;">34</div>
<div class="t" style="right:625px;top:578.0px;font-size:13px;color:#000;">178000</div>
<div class="t" style="left:-56px;width:200px;text-align:center;top:598.4px;font-size:12.5px;color:#262626;">18</div>
<div class="t" style="left:59.3px;top:598.0px;font-size:13px;color:#000;">Май</div>
<div class="t" style="right:705px;top:598.0px;font-size:13px;color:#000;">43</div>
<div class="t" style="right:625px;top:598.0px;font-size:13px;color:#000;">435</div>
<div class="t" style="left:-56px;width:200px;text-align:center;top:618.4px;font-size:12.5px;color:#262626;">19</div>
<div class="t" style="left:59.3px;top:618.0px;font-size:13px;color:#000;">Июнь</div>
<div class="t" style="right:705px;top:618.0px;font-size:13px;color:#000;">22</div>
<div class="t" style="right:625px;top:618.0px;font-size:13px;color:#000;">4234</div>
<div class="t" style="left:-56px;width:200px;text-align:center;top:638.4px;font-size:12.5px;color:#262626;">20</div>
<div class="t" style="left:59.3px;top:638.0px;font-size:13px;color:#000;">Июль</div>
<div class="t" style="right:705px;top:638.0px;font-size:13px;color:#000;">43</div>
<div class="t" style="right:625px;top:638.0px;font-size:13px;color:#000;">43543</div>
<div class="t" style="left:-56px;width:200px;text-align:center;top:658.4px;font-size:12.5px;color:#262626;">21</div>
<div class="t" style="left:59.3px;top:658.0px;font-size:13px;color:#000;">Август</div>
<div class="t" style="right:705px;top:658.0px;font-size:13px;color:#000;">5363</div>
<div class="t" style="right:625px;top:658.0px;font-size:13px;color:#000;">45234</div>
<div class="t" style="left:-56px;width:200px;text-align:center;top:678.4px;font-size:12.5px;color:#262626;">22</div>
<div class="t" style="left:59.3px;top:678.0px;font-size:13px;color:#000;">Сентябрь</div>
<div class="t" style="right:705px;top:678.0px;font-size:13px;color:#000;">324</div>
<div class="t" style="right:625px;top:678.0px;font-size:13px;color:#000;">543534</div>
<div class="t" style="left:-56px;width:200px;text-align:center;top:698.4px;font-size:12.5px;color:#262626;">23</div>
<div class="t" style="left:59.3px;top:698.0px;font-size:13px;color:#000;">Октябрь</div>
<div class="t" style="right:705px;top:698.0px;font-size:13px;color:#000;">31</div>
<div class="t" style="right:625px;top:698.0px;font-size:13px;color:#000;">4524</div>
<div class="t" style="left:-56px;width:200px;text-align:center;top:718.4px;font-size:12.5px;color:#262626;">24</div>
<div class="t" style="left:59.3px;top:718.0px;font-size:13px;color:#000;">Ноябрь</div>
<div class="t" style="right:705px;top:718.0px;font-size:13px;color:#000;">78</div>
<div class="t" style="right:625px;top:718.0px;font-size:13px;color:#000;">531908</div>
<div class="t" style="left:-56px;width:200px;text-align:center;top:738.4px;font-size:12.5px;color:#262626;">25</div>
<div class="t" style="left:59.3px;top:738.0px;font-size:13px;color:#000;">Декабрь</div>
<div class="t" style="right:705px;top:738.0px;font-size:13px;color:#000;">134</div>
<div class="t" style="right:625px;top:738.0px;font-size:13px;color:#000;">234524</div>
<div class="t" style="left:-56px;width:200px;text-align:center;top:758.4px;font-size:12.5px;color:#333;">26</div>
<div class="a" style="left:150px;top:272px;width:176px;height:343px;border:2px solid #2f63c9"></div>
<div class="a" style="left:148px;top:270px;width:7px;height:7px;background:#2f63c9;border:1px solid #fff"></div>
<div class="a" style="left:321px;top:270px;width:7px;height:7px;background:#2f63c9;border:1px solid #fff"></div>
<div class="a" style="left:148px;top:610px;width:7px;height:7px;background:#2f63c9;border:1px solid #fff"></div>
<div class="a" style="left:321px;top:610px;width:7px;height:7px;background:#2f63c9;border:1px solid #fff"></div>
<!-- BOTTOM -->
<div class="a" style="left:896px;top:254px;width:1px;height:507px;background:#a6a6a6"></div>
<!-- vertical scrollbar -->
<div class="a" style="left:897px;top:234px;width:18px;height:527px;background:#e6e6e6"></div>
<div class="a" style="left:900px;top:236px;width:15px;height:15px;background:#fff;border:1px solid #c2c2c2"></div>
<svg class="a" style="left:904px;top:241px" width="7" height="4" viewBox="0 0 7 4"><path d="M0 4h7L3.5 0z" fill="#666"/></svg>
<div class="a" style="left:900px;top:251px;width:15px;height:476px;background:#fff;border:1px solid #c2c2c2;border-top-width:2px;border-top-color:#b4b4b4"></div>
<div class="a" style="left:900px;top:727px;width:15px;height:20px;background:#dadada"></div>
<div class="a" style="left:900px;top:747px;width:15px;height:14px;background:#fff;border:1px solid #c2c2c2"></div>
<svg class="a" style="left:904px;top:752px" width="7" height="4" viewBox="0 0 7 4"><path d="M0 0h7L3.5 4z" fill="#666"/></svg>
<!-- sheet tab bar -->
<div class="a" style="left:32px;top:761px;width:883px;height:28px;background:#e6e6e6;border-top:1px solid #a6a6a6"></div>
<svg class="a" style="left:58px;top:771px" width="5" height="8" viewBox="0 0 5 8"><path d="M5 0v8L0 4z" fill="#c8c8c8"/></svg>
<svg class="a" style="left:87px;top:771px" width="5" height="8" viewBox="0 0 5 8"><path d="M0 0v8l5-4z" fill="#c8c8c8"/></svg>
<div class="a" style="left:131px;top:761px;width:60px;height:25px;background:#fff;border-left:1px solid #a6a6a6;border-right:1px solid #a6a6a6"></div>
<div class="a" style="left:131px;top:784px;width:60px;height:2px;background:#217346"></div>
<div class="t" style="left:143.3px;top:768px;font-size:12.6px;font-weight:bold;color:#217346;letter-spacing:-0.4px">Лист1</div>
<svg class="a" style="left:223px;top:766px" width="18" height="18" viewBox="0 0 18 18"><circle cx="9" cy="9" r="7.3" fill="none" stroke="#777" stroke-width="1.2"/><path d="M9 4.8v8.4M4.8 9h8.4" stroke="#666" stroke-width="1.7"/></svg>
<div class="a" style="left:563px;top:771px;width:2px;height:2px;background:#a8a8a8"></div>
<div class="a" style="left:563px;top:775px;width:2px;height:2px;background:#a8a8a8"></div>
<div class="a" style="left:563px;top:779px;width:2px;height:2px;background:#a8a8a8"></div>
<div class="a" style="left:580px;top:768px;width:16px;height:15px;background:#fff;border:1px solid #c2c2c2"></div>
<svg class="a" style="left:585px;top:771px" width="5" height="9" viewBox="0 0 5 9"><path d="M5 0v9L0 4.5z" fill="#555"/></svg>
<div class="a" style="left:595px;top:768px;width:239px;height:15px;background:#fff;border:1px solid #c2c2c2"></div>
<div class="a" style="left:834px;top:769px;width:48px;height:13px;background:#dadada"></div>
<div class="a" style="left:882px;top:768px;width:15px;height:15px;background:#fff;border:1px solid #c2c2c2"></div>
<svg class="a" style="left:887px;top:771px" width="5" height="9" viewBox="0 0 5 9"><path d="M0 0v9l5-4.5z" fill="#555"/></svg>
<!-- status bar -->
<div class="a" style="left:32px;top:789px;width:883px;height:21px;background:#f3f3f3;border-top:1px solid #cdcdcd"></div>
<div class="t" style="left:39px;top:795px;font-size:11.5px;color:#444">Готово</div>
<svg class="a" style="left:103px;top:793px" width="13" height="13" viewBox="0 0 13 13"><rect x="0" y="0" width="5" height="5" fill="#555"/><path d="M6 1.5h6M1 6.5h11M1 8.5h11M1 10.5h11M1 12.5h11M3 6v7M6 6v7M9 6v7M12 0v13" stroke="#666" stroke-width="0.8" fill="none"/></svg>
<div class="t" style="left:137px;top:795px;font-size:11.4px;color:#444">Расширить выделенный фрагмент</div>
<div class="a" style="left:604px;top:790px;width:40px;height:20px;background:#c8c8c8"></div>
<svg class="a" style="left:616px;top:793px" width="15" height="14" viewBox="0 0 15 14"><path d="M1 1h13v12H1zM1 5h13M1 9h13M5.3 1v12M9.7 1v12" fill="none" stroke="#6b6b6b" stroke-width="1.05"/></svg>
<svg class="a" style="left:656px;top:793px" width="16" height="14" viewBox="0 0 16 14"><path d="M1.5 0.7h13v12.6h-13z" fill="none" stroke="#6b6b6b" stroke-width="1.3"/><path d="M4.5 3.5h7v7h-7z" fill="none" stroke="#6b6b6b" stroke-width="1.1"/><path d="M6.2 5.6h3.6M6.2 7.5h3.6M6.2 9.4h3.6" stroke="#6b6b6b" stroke-width="0.8"/></svg>
<svg class="a" style="left:696px;top:793px" width="16" height="14" viewBox="0 0 16 14"><path d="M1.5 0.7h13v12.6h-13z" fill="none" stroke="#6b6b6b" stroke-width="1.3"/><path d="M1.5 7.6h8.9V0.7M5.9 0.7v6.9" fill="none" stroke="#6b6b6b" stroke-width="1.2"/></svg>
<div class="a" style="left:729px;top:799px;width:9px;height:1px;background:#555"></div>
<div class="a" style="left:744px;top:799px;width:99px;height:1px;background:#b0b0b0"></div>
<div class="a" style="left:791px;top:793px;width:5px;height:13px;background:#666"></div>
<div class="a" style="left:846px;top:799px;width:10px;height:1px;background:#555"></div>
<div class="a" style="left:851px;top:794px;width:1px;height:10px;background:#555"></div>
<div class="t" style="left:867.5px;top:795.5px;font-size:11px;color:#444">100 %</div>

<div class="a" style="left:376px;top:308px;width:480px;height:288px;background:#fff;border:1px solid #8d8d8d"></div>
<svg class="a" style="left:0;top:0" width="947" height="842" viewBox="0 0 947 842">
<path d="M425 532.5H824" stroke="#d9d9d9" stroke-width="1"/>
<path d="M425 503.5H824" stroke="#d9d9d9" stroke-width="1"/>
<path d="M425 473.5H824" stroke="#d9d9d9" stroke-width="1"/>
<path d="M425 444.5H824" stroke="#d9d9d9" stroke-width="1"/>
<path d="M425 414.5H824" stroke="#d9d9d9" stroke-width="1"/>
<path d="M425 385.5H824" stroke="#d9d9d9" stroke-width="1"/>
<path d="M425 355.5H824" stroke="#d9d9d9" stroke-width="1"/>
<text x="415" y="536.5" text-anchor="end" font-size="11" fill="#595959" font-family="Liberation Sans">0</text>
<text x="415" y="506.9" text-anchor="end" font-size="11" fill="#595959" font-family="Liberation Sans">50000</text>
<text x="415" y="477.4" text-anchor="end" font-size="11" fill="#595959" font-family="Liberation Sans">100000</text>
<text x="415" y="447.8" text-anchor="end" font-size="11" fill="#595959" font-family="Liberation Sans">150000</text>
<text x="415" y="418.2" text-anchor="end" font-size="11" fill="#595959" font-family="Liberation Sans">200000</text>
<text x="415" y="388.7" text-anchor="end" font-size="11" fill="#595959" font-family="Liberation Sans">250000</text>
<text x="415" y="359.1" text-anchor="end" font-size="11" fill="#595959" font-family="Liberation Sans">300000</text>
<text x="835" y="536.5" font-size="11" fill="#595959" font-family="Liberation Sans">0</text>
<text x="835" y="514.3" font-size="11" fill="#595959" font-family="Liberation Sans">50</text>
<text x="835" y="492.1" font-size="11" fill="#595959" font-family="Liberation Sans">100</text>
<text x="835" y="470.0" font-size="11" fill="#595959" font-family="Liberation Sans">150</text>
<text x="835" y="447.8" font-size="11" fill="#595959" font-family="Liberation Sans">200</text>
<text x="835" y="425.6" font-size="11" fill="#595959" font-family="Liberation Sans">250</text>
<text x="835" y="403.4" font-size="11" fill="#595959" font-family="Liberation Sans">300</text>
<text x="835" y="381.3" font-size="11" fill="#595959" font-family="Liberation Sans">350</text>
<text x="835" y="359.1" font-size="11" fill="#595959" font-family="Liberation Sans">400</text>
<text x="436.7" y="551" text-anchor="middle" font-size="11" fill="#595959" font-family="Liberation Sans">1</text>
<text x="460.2" y="551" text-anchor="middle" font-size="11" fill="#595959" font-family="Liberation Sans">2</text>
<text x="483.7" y="551" text-anchor="middle" font-size="11" fill="#595959" font-family="Liberation Sans">3</text>
<text x="507.1" y="551" text-anchor="middle" font-size="11" fill="#595959" font-family="Liberation Sans">4</text>
<text x="530.6" y="551" text-anchor="middle" font-size="11" fill="#595959" font-family="Liberation Sans">5</text>
<text x="554.1" y="551" text-anchor="middle" font-size="11" fill="#595959" font-family="Liberation Sans">6</text>
<text x="577.6" y="551" text-anchor="middle" font-size="11" fill="#595959" font-family="Liberation Sans">7</text>
<text x="601.0" y="551" text-anchor="middle" font-size="11" fill="#595959" font-family="Liberation Sans">8</text>
<text x="624.5" y="551" text-anchor="middle" font-size="11" fill="#595959" font-family="Liberation Sans">9</text>
<text x="648.0" y="551" text-anchor="middle" font-size="11" fill="#595959" font-family="Liberation Sans">10</text>
<text x="671.4" y="551" text-anchor="middle" font-size="11" fill="#595959" font-family="Liberation Sans">11</text>
<text x="694.9" y="551" text-anchor="middle" font-size="11" fill="#595959" font-family="Liberation Sans">12</text>
<text x="718.4" y="551" text-anchor="middle" font-size="11" fill="#595959" font-family="Liberation Sans">13</text>
<text x="741.8" y="551" text-anchor="middle" font-size="11" fill="#595959" font-family="Liberation Sans">14</text>
<text x="765.3" y="551" text-anchor="middle" font-size="11" fill="#595959" font-family="Liberation Sans">15</text>
<text x="788.8" y="551" text-anchor="middle" font-size="11" fill="#595959" font-family="Liberation Sans">16</text>
<text x="812.3" y="551" text-anchor="middle" font-size="11" fill="#595959" font-family="Liberation Sans">17</text>
<polyline points="436.7,500.4 460.2,487.4 483.7,505.8 507.1,427.2 530.6,529.8 554.1,500.9 577.6,486.4 601.0,505.8 624.5,474.8 648.0,529.8 671.4,387.1 694.9,393.8 718.4,512.1 741.8,487.4 765.3,530.9 788.8,427.2 812.3,532.2" fill="none" stroke="#ed7d31" stroke-width="3" stroke-linejoin="round" stroke-linecap="round"/>
<polyline points="436.7,526.3 460.2,525.0 483.7,521.0 507.1,497.9 530.6,531.2 554.1,525.8 577.6,513.4 601.0,520.5 624.5,520.1 648.0,518.8 671.4,497.9 694.9,473.1 718.4,509.0 741.8,508.6 765.3,379.5 788.8,517.4 812.3,513.4" fill="none" stroke="#4472c4" stroke-width="3" stroke-linejoin="round" stroke-linecap="round"/>
<text x="700.7" y="336" text-anchor="end" font-size="17.4" fill="#595959" font-family="Liberation Sans">Название диаграммы</text>
<path d="M559 576.5H585" stroke="#ed7d31" stroke-width="3" stroke-linecap="round"/>
<text x="588" y="579" font-size="10.8" fill="#595959" font-family="Liberation Sans">Ряд2</text>
<path d="M623 576.5H650" stroke="#4472c4" stroke-width="3" stroke-linecap="round"/>
<text x="652" y="579" font-size="10.8" fill="#595959" font-family="Liberation Sans">Ряд1</text>
<circle cx="376.5" cy="308.5" r="4.6" fill="#fff" stroke="#8d8d8d" stroke-width="1.6"/>
<circle cx="616.0" cy="308.5" r="4.6" fill="#fff" stroke="#8d8d8d" stroke-width="1.6"/>
<circle cx="855.5" cy="308.5" r="4.6" fill="#fff" stroke="#8d8d8d" stroke-width="1.6"/>
<circle cx="376.5" cy="452.0" r="4.6" fill="#fff" stroke="#8d8d8d" stroke-width="1.6"/>
<circle cx="855.5" cy="452.0" r="4.6" fill="#fff" stroke="#8d8d8d" stroke-width="1.6"/>
<circle cx="376.5" cy="595.5" r="4.6" fill="#fff" stroke="#8d8d8d" stroke-width="1.6"/>
<circle cx="616.0" cy="595.5" r="4.6" fill="#fff" stroke="#8d8d8d" stroke-width="1.6"/>
<circle cx="855.5" cy="595.5" r="4.6" fill="#fff" stroke="#8d8d8d" stroke-width="1.6"/>
</svg>
<div class="a" style="left:409px;top:115px;width:248px;height:454px;background:#fff;border:1px solid #c6c6c6;box-shadow:0 1px 5px rgba(0,0,0,0.2)"></div>
<svg class="a" style="left:414px;top:121px" width="18" height="17" viewBox="0 0 18 17"><path d="M5 1.5l6.5 9M13 1.5l-6.5 9" stroke="#555" stroke-width="1.7"/><circle cx="5" cy="11.8" r="2.7" fill="#fff" stroke="#3c78c8" stroke-width="1.1"/><circle cx="13" cy="11.8" r="2.7" fill="#fff" stroke="#3c78c8" stroke-width="1.1"/></svg>
<div class="t" style="left:443px;top:122.5px;font-size:12px;color:#3b3b3b"><span style="text-decoration:underline;text-underline-offset:1.5px">В</span>ырезать</div>
<svg class="a" style="left:414px;top:145px" width="18" height="17" viewBox="0 0 18 17"><path d="M1.5 1.5h6l2 2v8h-8z" fill="#fff" stroke="#555"/><path d="M3 4.5h3M3 6.5h3M3 8.5h3" stroke="#3c78c8"/><path d="M7.5 5.5h6l2.5 2.5v7.5h-8.5z" fill="#fff" stroke="#555"/><path d="M9.5 8.5h5M9.5 11h5M9.5 13.5h5" stroke="#3c78c8" stroke-width="0.9"/></svg>
<div class="t" style="left:443px;top:146.5px;font-size:12px;color:#3b3b3b">К<span style="text-decoration:underline;text-underline-offset:1.5px">о</span>пировать</div>
<div class="a" style="left:435px;top:165px;width:220px;height:22px;background:#e8e8e8"></div>
<div class="t" style="left:444.5px;top:170.6px;font-size:11.5px;font-weight:bold;color:#555">Параметры вставки:</div>
<svg class="a" style="left:414px;top:169px" width="18" height="17" viewBox="0 0 18 17"><rect x="1.5" y="2.5" width="11" height="12" rx="1" fill="#d6d4d6"/><rect x="4" y="1.5" width="6" height="3" fill="#b4b4b4"/><path d="M8.5 8.5h5l2.5 2.5v5h-7.5z" fill="#f4f0f6" stroke="#c0bcc0"/></svg>
<svg class="a" style="left:440px;top:190px" width="23" height="25" viewBox="0 0 23 25"><rect x="1" y="3" width="16" height="19" rx="1" fill="#d4d2d4"/><rect x="4" y="1.5" width="10" height="4" rx="1" fill="#b0b0b0"/><rect x="7.5" y="0" width="3" height="2" fill="#b0b0b0"/><path d="M10.5 10.5h7.5l4 4v10h-11.5z" fill="#f4f0f6" stroke="#c0bcc0"/><path d="M18 10.5v4h4" fill="none" stroke="#c0bcc0"/></svg>
<div class="a" style="left:443px;top:217px;width:212px;height:1px;background:#e1e1e1"></div>
<svg class="a" style="left:414px;top:223px" width="18" height="17" viewBox="0 0 18 17"><rect x="4.5" y="3.5" width="12" height="12" fill="#fff" stroke="#555"/><rect x="12" y="3" width="5" height="2" fill="#555"/><circle cx="8" cy="8.5" r="1" fill="#555"/><circle cx="8" cy="12" r="1" fill="none" stroke="#555" stroke-width="0.8"/><path d="M10 8.5h4M10 12h4" stroke="#555"/><path d="M1.5 5.5C3 2 7 1 9 3.5" fill="none" stroke="#3c78c8" stroke-width="1.5"/><path d="M0 3l1.5 4 3-2.5z" fill="#3c78c8"/></svg>
<div class="t" style="left:443px;top:224.5px;font-size:12px;color:#3b3b3b">Во<span style="text-decoration:underline;text-underline-offset:1.5px">с</span>становить стиль</div>
<div class="a" style="left:443px;top:243px;width:212px;height:1px;background:#e1e1e1"></div>
<svg class="a" style="left:414px;top:249px" width="18" height="17" viewBox="0 0 18 17"><text x="4" y="13" font-size="12" font-weight="bold" fill="#444" font-family="Liberation Sans">A</text></svg>
<div class="t" style="left:443px;top:250.5px;font-size:12px;color:#3b3b3b"><span style="text-decoration:underline;text-underline-offset:1.5px">Ш</span>рифт...</div>
<div class="a" style="left:443px;top:269px;width:212px;height:1px;background:#e1e1e1"></div>
<svg class="a" style="left:414px;top:275px" width="18" height="17" viewBox="0 0 18 17"><rect x="2" y="6" width="4" height="9" fill="#3f77b5"/><rect x="7" y="1" width="4" height="14" fill="#e7bb7a"/><rect x="12" y="4" width="4" height="11" fill="#6b6b6b"/></svg>
<div class="t" style="left:443px;top:276.5px;font-size:12px;color:#3b3b3b">Изменить тип диаграммы<span style="text-decoration:underline;text-underline-offset:1.5px">.</span>..</div>
<svg class="a" style="left:414px;top:299px" width="18" height="17" viewBox="0 0 18 17"><rect x="2" y="5" width="4" height="9" fill="#3f77b5"/><rect x="7" y="0" width="4" height="4" fill="#b89a63"/><rect x="12" y="0" width="4" height="3" fill="#555"/><path d="M7 5h10v11H7z" fill="#8052a8"/><rect x="9" y="5" width="6" height="3" fill="#fff"/><rect x="9" y="11" width="6" height="4" fill="#fff"/></svg>
<div class="t" style="left:443px;top:300.5px;font-size:12px;color:#3b3b3b">С<span style="text-decoration:underline;text-underline-offset:1.5px">о</span>хранить как шаблон...</div>
<svg class="a" style="left:414px;top:323px" width="18" height="17" viewBox="0 0 18 17"><rect x="1.5" y="1.5" width="13" height="11" fill="#fff" stroke="#666"/><path d="M1.5 1.5h13v2h-13z" fill="#666"/><path d="M1.5 6.5h13M1.5 9.5h8M5.5 3.5v9M9.5 3.5v6" stroke="#888"/><path d="M5.5 6.5v4M5.5 6.5h4" stroke="#ed7d31" stroke-width="1.2"/><rect x="8.5" y="9.5" width="8" height="7" fill="#fff" stroke="#666"/><path d="M11 15.5v-2M13 15.5v-4M15 15.5v-3" stroke="#666"/></svg>
<div class="t" style="left:443px;top:324.5px;font-size:12px;color:#3b3b3b"><span style="text-decoration:underline;text-underline-offset:1.5px">В</span>ыбрать данные...</div>
<svg class="a" style="left:414px;top:347px" width="18" height="17" viewBox="0 0 18 17"><rect x="1.5" y="1.5" width="15" height="11" fill="#fff" stroke="#555"/><path d="M5.5 10.5v-5h2v5M7.5 10.5v-7h2v7M9.5 10.5v-4h2v4M4 10.5h9" fill="none" stroke="#555" stroke-width="0.9"/><path d="M5 14.5h8" stroke="#555"/></svg>
<div class="t" style="left:443px;top:348.5px;font-size:12px;color:#3b3b3b">Пере<span style="text-decoration:underline;text-underline-offset:1.5px">м</span>естить диаграмму...</div>
<svg class="a" style="left:414px;top:371px" width="18" height="17" viewBox="0 0 18 17"><path d="M3 4l3-2.5h9v10l-3 3H3z" fill="#eaeaea" stroke="#c4c4c4"/><path d="M3 4h9v10.5M12 4l3-2.5" fill="none" stroke="#c4c4c4"/><path d="M12 4h3v10l-3 0.5z" fill="#d0d0d0"/></svg>
<div class="t" style="left:443px;top:372.5px;font-size:12px;color:#a6a6a6">Поворот об<span style="text-decoration:underline;text-underline-offset:1.5px">ъ</span>емной фигуры...</div>
<div class="a" style="left:443px;top:391px;width:212px;height:1px;background:#e1e1e1"></div>
<svg class="a" style="left:414px;top:397px" width="18" height="17" viewBox="0 0 18 17"><g fill="#c8c8c8"><rect x="1" y="1" width="2" height="2"/><rect x="15" y="1" width="2" height="2"/><rect x="1" y="14" width="2" height="2"/><rect x="15" y="14" width="2" height="2"/></g><path d="M4.5 4.5h6v5h-6zM7.5 7.5h6v5h-6z" fill="#f4eef4" stroke="#bcbcbc"/><path d="M2 4v9M16 4v9M4 1.5h10M4 15.5h10" stroke="#c8c8c8" stroke-dasharray="1 1"/></svg>
<div class="t" style="left:443px;top:398.5px;font-size:12px;color:#a6a6a6"><span style="text-decoration:underline;text-underline-offset:1.5px">Г</span>руппировать</div>
<svg class="a" style="left:641px;top:401px" width="5" height="8" viewBox="0 0 5 8"><path d="M0 0v8l4.5-4z" fill="#b4b4b4"/></svg>
<svg class="a" style="left:414px;top:421px" width="18" height="17" viewBox="0 0 18 17"><path d="M1.5 4.5v-3h3M16.5 12.5v3h-3" fill="none" stroke="#b8b8b8"/><rect x="4" y="4" width="9" height="9" fill="#d4d2d4"/></svg>
<div class="t" style="left:443px;top:422.5px;font-size:12px;color:#a6a6a6">На пере<span style="text-decoration:underline;text-underline-offset:1.5px">д</span>ний план</div>
<div class="a" style="left:632px;top:421px;width:1px;height:16px;background:#e1e1e1"></div>
<svg class="a" style="left:641px;top:425px" width="5" height="8" viewBox="0 0 5 8"><path d="M0 0v8l4.5-4z" fill="#b4b4b4"/></svg>
<svg class="a" style="left:414px;top:445px" width="18" height="17" viewBox="0 0 18 17"><rect x="1.5" y="1.5" width="5" height="5" fill="#fff" stroke="#b8b8b8"/><rect x="4" y="5" width="7" height="7" fill="#d4d2d4"/><rect x="10.5" y="10.5" width="5" height="5" fill="#fff" stroke="#b8b8b8"/></svg>
<div class="t" style="left:443px;top:446.5px;font-size:12px;color:#a6a6a6">На задн<span style="text-decoration:underline;text-underline-offset:1.5px">и</span>й план</div>
<div class="a" style="left:632px;top:445px;width:1px;height:16px;background:#e1e1e1"></div>
<svg class="a" style="left:641px;top:449px" width="5" height="8" viewBox="0 0 5 8"><path d="M0 0v8l4.5-4z" fill="#b4b4b4"/></svg>
<div class="a" style="left:443px;top:465px;width:212px;height:1px;background:#e1e1e1"></div>
<div class="t" style="left:443px;top:472.5px;font-size:12px;color:#3b3b3b">Н<span style="text-decoration:underline;text-underline-offset:1.5px">а</span>значить макрос...</div>
<div class="a" style="left:443px;top:491px;width:212px;height:1px;background:#e1e1e1"></div>
<svg class="a" style="left:414px;top:497px" width="18" height="17" viewBox="0 0 18 17"><rect x="1.5" y="1.5" width="13" height="12" fill="#fff" stroke="#555"/><circle cx="10.5" cy="5" r="1.5" fill="#f2a65a"/><path d="M2 13l3.5-5 2.5 3 2-2 3 4z" fill="#3c78c8"/><rect x="6.5" y="10.5" width="10" height="5" fill="#fff" stroke="#555"/><path d="M8.5 13h6" stroke="#777"/></svg>
<div class="t" style="left:443px;top:498.5px;font-size:12px;color:#3b3b3b">Изменить замеща<span style="text-decoration:underline;text-underline-offset:1.5px">ю</span>щий текст...</div>
<svg class="a" style="left:414px;top:521px" width="18" height="17" viewBox="0 0 18 17"><rect x="2" y="6" width="3.5" height="10" fill="#a8a8a8"/><rect x="6.5" y="1" width="3.5" height="15" fill="#8a8a8a"/><path d="M11 8l5-6v6l-2 3z" fill="#6b6b6b"/><path d="M4 16c2-1 5-2 7-5l3 2c-2 2-6 3-10 3z" fill="#3c78c8"/><path d="M11 11l4-4" stroke="#555" stroke-width="1.5"/></svg>
<div class="t" style="left:443px;top:522.5px;font-size:12px;color:#3b3b3b"><span style="text-decoration:underline;text-underline-offset:1.5px">Ф</span>ормат области диаграммы...</div>
<div class="a" style="left:443px;top:541px;width:212px;height:1px;background:#e1e1e1"></div>
<svg class="a" style="left:414px;top:547px" width="18" height="17" viewBox="0 0 18 17"><rect x="1.5" y="1.5" width="11" height="12" fill="#fff" stroke="#c0c0c0"/><path d="M2 5.5h10M5.5 2v11" stroke="#d0d0d0" stroke-width="2"/><rect x="7.5" y="8.5" width="9" height="8" fill="#fff" stroke="#b8b8b8"/><path d="M9.5 11h1.5M12.5 11h2.5M9.5 14h1.5M12.5 14h2.5" stroke="#b8b8b8"/></svg>
<div class="t" style="left:443px;top:548.5px;font-size:12px;color:#a6a6a6">Параметры свод<span style="text-decoration:underline;text-underline-offset:1.5px">н</span>ой диаграммы...</div>
<div class="a" style="left:404px;top:265px;width:214px;height:36px;border:4.5px solid #f00;border-radius:12px;filter:drop-shadow(2px 3px 3px rgba(0,0,0,0.42))"></div>
<!-- MINI TOOLBAR -->
<div class="a" style="left:409px;top:584px;width:202px;height:63px;background:#fff;border:1px solid #c6c6c6;box-shadow:2px 2px 4px rgba(0,0,0,0.22)"></div>
<svg class="a" style="left:426px;top:589px" width="26" height="27" viewBox="0 0 26 27"><path d="M5 10.5l7-7 8 8-7 7z" fill="#fff" stroke="#555" stroke-width="1.1"/><path d="M9.5 7V2.5a1.5 1.5 0 0 1 3 0V8" fill="none" stroke="#555" stroke-width="1"/><circle cx="11" cy="8.3" r="1" fill="#555"/><path d="M20 11.5c2 1 3 3.5 2 7" fill="none" stroke="#3c78c8" stroke-width="2"/><rect x="1" y="19.8" width="24" height="6" fill="#ed7d31"/></svg>
<svg class="a" style="left:452px;top:601px" width="7" height="4" viewBox="0 0 7 4"><path d="M0 0h7L3.5 4z" fill="#555"/></svg>
<div class="t" style="left:417px;top:622.6px;font-size:11.1px;color:#444">Заливка</div>
<svg class="a" style="left:475px;top:589px" width="26" height="27" viewBox="0 0 26 27"><path d="M15 3.5H1.5v15h2" fill="none" stroke="#555" stroke-width="1.1"/><path d="M7 17l2-5 10-10 3 3-10 10z" fill="#3c78c8"/><path d="M18 3l3 3" stroke="#fff" stroke-width="0.8"/><rect x="1" y="19.8" width="24" height="6" fill="#4472c4"/></svg>
<svg class="a" style="left:501px;top:601px" width="7" height="4" viewBox="0 0 7 4"><path d="M0 0h7L3.5 4z" fill="#555"/></svg>
<div class="t" style="left:469px;top:622.6px;font-size:11.3px;color:#444">Контур</div>
<div class="a" style="left:511px;top:603px;width:96px;height:24px;background:#fff;border:1px solid #c6c6c6"></div>
<div class="a" style="left:514px;top:604px;width:78px;height:22px;overflow:hidden"><div class="t" style="left:1px;top:4px;font-size:12px;color:#262626">Область диаграммы</div></div>
<svg class="a" style="left:596px;top:613px" width="7" height="4" viewBox="0 0 7 4"><path d="M0 0h7L3.5 4z" fill="#555"/></svg>

</body></html>
